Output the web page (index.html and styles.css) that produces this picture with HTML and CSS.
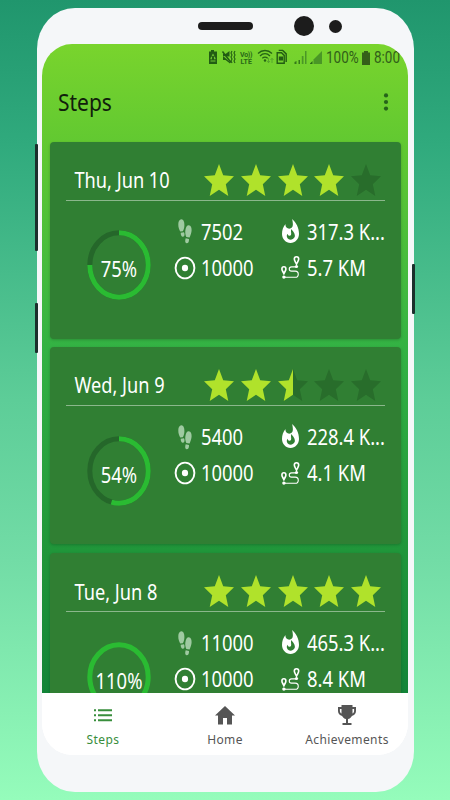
FILE: index.html
```html
<!DOCTYPE html>
<html lang="en">
<head>
<meta charset="utf-8">
<title>Steps</title>
<link rel="stylesheet" href="styles.css">
</head>
<body>
<svg class="defs" aria-hidden="true">
  <symbol id="star" viewBox="2 2 20 19" preserveAspectRatio="none"><path d="M12 17.27 18.18 21l-1.64-7.03L22 9.24l-7.19-.61L12 2 9.19 8.63 2 9.24l5.46 4.73L5.82 21z"/></symbol>
  <symbol id="half" viewBox="2 2 20 19" preserveAspectRatio="none"><path d="M12 2v15.27L5.82 21l1.64-7.03L2 9.24l7.19-.61z"/></symbol>
  <symbol id="feet" viewBox="0 0 14 25" preserveAspectRatio="none"><path d="M3.2.3C5.500.2 6.600 3.200 6.400 6.500 6.300 9 5.700 11 4.800 12.300L2.200 12.500C1 10.300.2 8 .3 5 .4 2.300 1.500.4 3.200.3zM2.700 13.700l3.300-.5c1 2 .6 4.300-.9 4.500-1.500.2-2.600-1.700-2.400-4zM10.800 6.200c2.200.2 3 2.500 2.800 5.500-.2 2.600-1.200 4.700-2 6.700L8.300 18C7.300 15.800 7 13.500 7.400 11 7.900 8 9 6.100 10.800 6.200zM7.700 19.300l3.300.6c.2 2.600-.8 4.500-2.400 4.400-1.500-.1-1.800-2.500-.9-5z"/></symbol>
  <symbol id="target" viewBox="0 0 22 24" preserveAspectRatio="none"><ellipse cx="11" cy="12" rx="9.400" ry="10.400" fill="none" stroke="currentColor" stroke-width="1.900"/><ellipse cx="11" cy="12" rx="3.100" ry="3.300"/></symbol>
  <symbol id="fire" viewBox="4 .6 16 21.400" preserveAspectRatio="none"><path d="M13.500.67s.74 2.650.74 4.800c0 2.060-1.350 3.730-3.410 3.730-2.070 0-3.630-1.670-3.630-3.730l.03-.36C5.210 7.510 4 10.620 4 14c0 4.420 3.580 8 8 8s8-3.580 8-8C20 8.610 17.410 3.800 13.500.67zM11.710 19c-1.780 0-3.220-1.400-3.220-3.140 0-.9.3-1.660.85-2.200.2 1.200.9 1.900 1.700 1.900 1.400 0 1.900-1.200 1.500-3.200-.2-1.100-.1-2 .3-2.900.9 1.500 2.300 2.500 2.900 4.200.3.900.4 1.700.4 2.300-.6 1.900-2.300 3.040-4.430 3.040z"/></symbol>
  <symbol id="route" viewBox="0 0 19 23" preserveAspectRatio="none"><g fill="none" stroke="currentColor" stroke-width="1.600"><path d="M2.900 17.600C1.600 15 .9 14.300.9 12.900a2 2.100 0 0 1 4 0c0 1.400-.7 2.100-2 4.700zM15.500 8.200c-1.400-2.800-2.200-3.600-2.200-5.100a2.200 2.300 0 0 1 4.400 0c0 1.500-.8 2.300-2.200 5.100z"/><path stroke-width="1.100" d="M15.500 10.900h-5c-3 0-3 4.200 0 4.200h3.700c4.100 0 4.100 6.200 0 6.200H3"/></g><circle cx="15.500" cy="10.500" r="1.600"/><circle cx="2.900" cy="21.100" r="1.700"/></symbol>
</svg>

<div class="phone">
  <i class="key key-volume"></i><i class="key key-assist"></i><i class="key key-power"></i>
  <div class="bezel"><i class="speaker"></i><i class="camera"></i><i class="sensor"></i></div>
  <div class="screen">
    <div class="app">
      <div class="status">
        <svg class="status-icons" viewBox="0 0 115 18" width="115" height="18">
          <g fill="#225d13">
            <path d="M1 3.500h2V2h3v1.500h3V16H1z"/>
            <path fill="#72c936" d="M5 5.500l1.300 2.300-.7.400L5 7.300l-.6.900-.7-.4zM2.500 10l1-1.500.8.500-.7 1.200H4v1H2.500zM7.500 10l-1-1.500-.8.500.7 1.200H6v1h1.500zM2.500 12.500h5v1h-5z"/>
            <path d="M15 6h2.500l4-3v5.500l-6.500-.5zM15 8l7 6v1.500L17.500 12H15z"/>
            <path d="M14.500 3.500l8.500 11" stroke="#225d13" stroke-width="1.500"/>
            <path d="M24 3l-1 2 1 2-1 2 1 2-1 2 1 2M27 3l-1 2 1 2-1 2 1 2-1 2 1 2" fill="none" stroke="#225d13" stroke-width="1.100"/>
          </g>
          <g class="volte"><text x="32" y="8.800" textLength="12.500">Vo))</text><text x="32.500" y="16" textLength="11.500">LTE</text></g>
          <g fill="none" stroke="#246414" stroke-width="1.300"><path d="M50 5.500c4-4 10-4 14 0M52 8c3-3 7-3 10 0M54.300 10.300c2-1.700 3.400-1.700 5.400 0"/></g>
          <circle cx="57" cy="12.500" r="1.200" fill="#246414"/>
          <path d="M60.500 10v4.500M59 13l1.500 1.700L62 13M64 15v-4.500M62.500 12l1.500-1.700 1.500 1.700" fill="none" stroke="#4f9c2c" stroke-width=".8"/>
          <path d="M69.200 4.700h4.300l2.700 2.700v7.800h-7zM70.700 2.400h4l3.500 3.500v8" fill="none" stroke="#225d13" stroke-width="1.400"/>
          <path d="M70.800 8.500h4.200v4h-4.200z" fill="#225d13"/>
          <path d="M86.500 16v-2l2-1v3zM90.500 16v-4h1.500v4z" fill="#347819"/><path d="M93.800 16V8h1.700v8zM97 16V3h1.500v13z" fill="#4a9726"/>
          <path d="M102 16v-.5l2.500-2.500v3z" fill="#286916"/><path d="M105.500 16v-4.500L114 3v13z" fill="#4a9726"/>
        </svg>
        <span class="status-text percent">100%</span>
        <svg class="battery" viewBox="0 0 8 14" width="8" height="14"><path d="M2 0h4v1.500h2V14H0V1.500h2z" fill="#345f19"/></svg>
        <span class="status-text">8:00</span>
      </div>
      <header class="toolbar">
        <h1>Steps</h1>
        <svg class="more" viewBox="0 0 6 20" width="6" height="20"><circle cx="3" cy="3.400" r="2.100"/><circle cx="3" cy="10" r="2.100"/><circle cx="3" cy="16.600" r="2.100"/></svg>
      </header>
      <main class="days">
        <section class="card">
          <div class="head"><h2>Thu, Jun 10</h2>
            <div class="stars"><svg><use href="#star"/></svg><svg><use href="#star"/></svg><svg><use href="#star"/></svg><svg><use href="#star"/></svg><svg class="off"><use href="#star"/></svg></div>
          </div>
          <div class="body">
            <div class="ring"><svg viewBox="0 0 64 70"><ellipse class="track" cx="32" cy="35" rx="29.200" ry="32.200"/><ellipse class="arc" cx="32" cy="35" rx="29.200" ry="32.200" pathLength="100" stroke-dasharray="75 25" stroke-dashoffset="25"/></svg><span class="text">75%</span></div>
            <div class="stat"><svg class="feet"><use href="#feet"/></svg><span class="text">7502</span></div>
            <div class="stat"><svg class="fire"><use href="#fire"/></svg><span class="text">317.3 K...</span></div>
            <div class="stat"><svg class="target"><use href="#target"/></svg><span class="text">10000</span></div>
            <div class="stat"><svg class="route"><use href="#route"/></svg><span class="text">5.7 KM</span></div>
          </div>
        </section>
        <section class="card">
          <div class="head"><h2>Wed, Jun 9</h2>
            <div class="stars"><svg><use href="#star"/></svg><svg><use href="#star"/></svg><svg><use class="empty" href="#star"/><use href="#half"/></svg><svg class="off"><use href="#star"/></svg><svg class="off"><use href="#star"/></svg></div>
          </div>
          <div class="body">
            <div class="ring"><svg viewBox="0 0 64 70"><ellipse class="track" cx="32" cy="35" rx="29.200" ry="32.200"/><ellipse class="arc" cx="32" cy="35" rx="29.200" ry="32.200" pathLength="100" stroke-dasharray="54 46" stroke-dashoffset="25"/></svg><span class="text">54%</span></div>
            <div class="stat"><svg class="feet"><use href="#feet"/></svg><span class="text">5400</span></div>
            <div class="stat"><svg class="fire"><use href="#fire"/></svg><span class="text">228.4 K...</span></div>
            <div class="stat"><svg class="target"><use href="#target"/></svg><span class="text">10000</span></div>
            <div class="stat"><svg class="route"><use href="#route"/></svg><span class="text">4.1 KM</span></div>
          </div>
        </section>
        <section class="card">
          <div class="head"><h2>Tue, Jun 8</h2>
            <div class="stars"><svg><use href="#star"/></svg><svg><use href="#star"/></svg><svg><use href="#star"/></svg><svg><use href="#star"/></svg><svg><use href="#star"/></svg></div>
          </div>
          <div class="body">
            <div class="ring"><svg viewBox="0 0 64 70"><ellipse class="arc" cx="32" cy="35" rx="29.200" ry="32.200"/></svg><span class="text">110%</span></div>
            <div class="stat"><svg class="feet"><use href="#feet"/></svg><span class="text">11000</span></div>
            <div class="stat"><svg class="fire"><use href="#fire"/></svg><span class="text">465.3 K...</span></div>
            <div class="stat"><svg class="target"><use href="#target"/></svg><span class="text">10000</span></div>
            <div class="stat"><svg class="route"><use href="#route"/></svg><span class="text">8.4 KM</span></div>
          </div>
        </section>
      </main>
    </div>
    <nav class="tabs">
      <a class="tab active"><svg viewBox="0 0 20 20" width="20" height="20"><path d="M1 4.200h2v2H1zM5 4.200h14v2H5zM1 9.200h2v2H1zM5 9.200h14v2H5zM1 14.200h2v2H1zM5 14.200h14v2H5z"/></svg><span>Steps</span></a>
      <a class="tab"><svg viewBox="0 0 20 20" width="20" height="20"><path d="M8 19.500v-6.500h4v6.500h5v-9h3L10 1 0 10.500h3v9z"/></svg><span>Home</span></a>
      <a class="tab"><svg viewBox="0 0 20 20" width="20" height="20"><path fill-rule="evenodd" d="M15.500 2V0h-11v2H1v4c0 2.600 1.700 4.600 4.100 4.900.8 1.600 2.200 2.700 3.900 3.100V18H5.500v2h9v-2H11v-4c1.700-.4 3.100-1.500 3.900-3.100C17.300 10.600 19 8.600 19 6V2zM2.900 6V4h1.600v4.600C3.600 8.200 2.900 7.200 2.900 6zm14.200 0c0 1.200-.7 2.200-1.600 2.600V4h1.600z"/></svg><span>Achievements</span></a>
    </nav>
  </div>
</div>
</body>
</html>
```

FILE: styles.css
```css
* { box-sizing: border-box; }
body {
  margin: 0;
  height: 800px;
  overflow: hidden;
  padding: 8px 36px 8px 37px;
  background: linear-gradient(#20966d 0%, #30aa7d 18%, #5dcd98 50%, #72dca6 70%, #95fcbb 100%);
  font-family: "Noto Sans", sans-serif;
}
h1, h2 { margin: 0; font-weight: 400; }
i { display: block; }
.defs { position: absolute; width: 0; height: 0; }

.phone {
  position: relative;
  height: 784px;
  padding: 0 5px;
  border-radius: 38px / 41px;
  background: #f5f7f9;
}
.key { position: absolute; width: 3px; background: #1b2f2c; border-radius: 1px; }
.key-volume { left: -2px; top: 136px; height: 107px; }
.key-assist { left: -2px; top: 295px; height: 50px; }
.key-power { right: -1px; top: 256px; height: 50px; }
.bezel { display: flex; align-items: center; height: 36px; padding-left: 156px; }
.speaker { width: 55px; height: 8px; border-radius: 4px; background: #1c1c1c; }
.camera { width: 20px; height: 20px; border-radius: 50%; background: #1c1c1c; margin-left: 41px; }
.sensor { width: 13px; height: 13px; border-radius: 50%; background: #1c1c1c; margin-left: 15px; }

.screen {
  width: 366px;
  height: 711px;
  overflow: hidden;
  border-radius: 30px / 32px;
  background: #fff;
  display: flex;
  flex-direction: column;
}
.app {
  height: 649px;
  overflow: hidden;
  background: linear-gradient(#79d42d 0%, #62c931 15%, #33b244 47%, #20963a 78%, #128438 100%);
}
.status { display: flex; align-items: center; height: 27px; padding-left: 166px; }
.status-icons { flex: none; margin-top: -1px; }
.volte { font: 700 7px "Roboto", sans-serif; fill: #286818; }
.status-text {
  font: 15px/27px "Roboto", sans-serif;
  color: #315f19;
  display: inline-block;
  transform: translateY(1px) scale(.9, 1.1);
  transform-origin: left center;
  width: 26px;
  white-space: nowrap;
}
.percent { margin-left: 3px; width: 36px; }
.battery { margin-right: 4px; }
.toolbar {
  display: flex;
  justify-content: space-between;
  align-items: center;
  height: 62px;
  padding: 0 19px 0 16px;
}
h1 { font-size: 21px; line-height: 30px; color: #10200b; transform: scaleY(1.1); transform-origin: left center; }
.more { fill: #26631a; }

.days { display: flex; flex-direction: column; gap: 8.800px; padding: 8.500px 7.500px 0 8px; }
.card {
  height: 197px;
  flex: none;
  padding: 17px 16px 0;
  border-radius: 4px;
  background: #307f33;
  box-shadow: 0 1px 3px #0003;
}
.head {
  display: flex;
  justify-content: space-between;
  height: 42px;
  padding: 0 3.500px 0 8.500px;
  border-bottom: 1px solid #8bb78c;
}
h2, .text { color: #fff; white-space: nowrap; font-size: 18.400px; line-height: 22px; transform: scaleY(1.2); }
h2 { line-height: 42px; font-size: 18.200px; transform-origin: left center; }
.stars { display: flex; gap: 6.700px; padding-top: 5px; }
.stars svg { width: 30px; height: 32px; fill: #b0e22b; }
.stars .off, .stars .empty { fill: #286d2b; }
.body {
  display: grid;
  grid-template-columns: 107px 106px 1fr;
  grid-template-rows: 36px 36px;
  padding-top: 13px;
}
.ring { position: relative; grid-row: 1 / 3; width: 64px; height: 70px; margin: 16.500px 0 0 21px; display: flex; align-items: center; justify-content: center; }
.ring svg { position: absolute; left: 0; top: 0; width: 64px; height: 70px; }
.ring .text { margin-top: 8px; position: relative; }
.track, .arc { fill: none; stroke-width: 5px; }
.track { stroke: #25672a; }
.arc { stroke: #2abb32; }
.stat { display: flex; align-items: center; color: #fff; fill: #fff; }
.stat svg { flex: none; color: #fff; }
.stat .text { transform-origin: left center; }
.stat .feet { width: 14px; height: 25px; margin: 0 9px 0 5px; fill: #9fcaa1; }
.stat .target { width: 22px; height: 24px; margin: 0 5px 0 1px; }
.stat .fire { width: 17px; height: 24px; margin: -2px 8px 0 3px; }
.stat .route { width: 19px; height: 23px; margin: 0 7px 0 2px; }

.tabs { display: grid; grid-template-columns: repeat(3, 1fr); height: 62px; background: #fff; }
.tab { display: flex; flex-direction: column; align-items: center; padding-top: 12px; color: #555; fill: #555; }
.tab span { font-size: 12px; line-height: 18px; letter-spacing: .4px; margin-top: 6px; transform: scaleY(1.1); }
.active { color: #388e3c; fill: #388e3c; }
```
